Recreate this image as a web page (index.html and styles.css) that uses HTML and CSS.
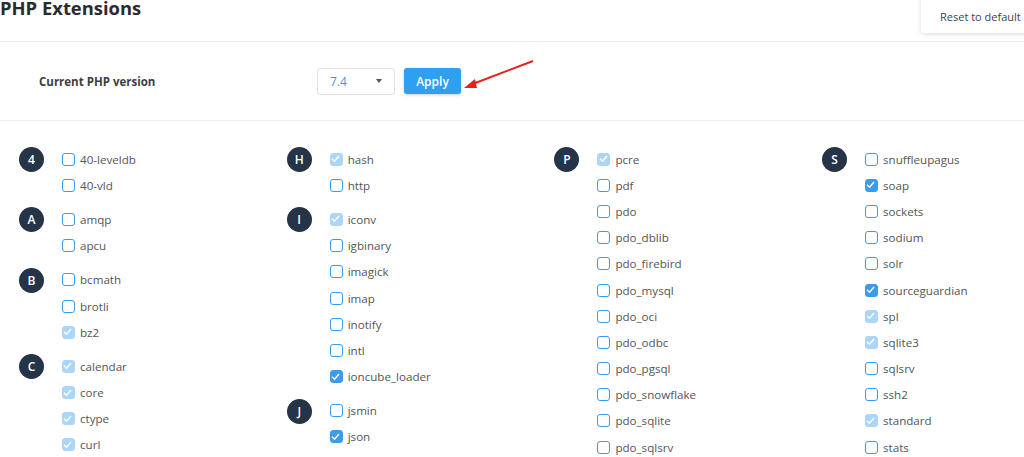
FILE: index.html
```html
<!DOCTYPE html>
<html>
<head>
<meta charset="utf-8">
<link rel="stylesheet" href="styles.css">
</head>
<body>
<div class="page">
  <header class="head">
    <h1 class="title">PHP Extensions</h1>
    <button class="reset">Reset to default</button>
  </header>
  <section class="version">
    <span class="version-label">Current PHP version</span>
    <div class="select"><span class="select-val">7.4</span><span class="caret"></span></div>
    <button class="apply">Apply</button>
    <svg class="arrow" width="80" height="40" viewBox="0 0 80 40">
      <line x1="75" y1="3" x2="12" y2="27" stroke="#e8201c" stroke-width="2"/>
      <polygon points="6,30 17,21 19,30" fill="#e8201c"/>
    </svg>
  </section>
  <section class="grid">
    <div class="col">
      <div class="group"><span class="letter">4</span><ul class="list">
        <li class="item"><span class="cb"></span>40-leveldb</li>
        <li class="item"><span class="cb"></span>40-vld</li></ul></div>
      <div class="group"><span class="letter">A</span><ul class="list">
        <li class="item"><span class="cb"></span>amqp</li>
        <li class="item"><span class="cb"></span>apcu</li></ul></div>
      <div class="group"><span class="letter">B</span><ul class="list">
        <li class="item"><span class="cb"></span>bcmath</li>
        <li class="item"><span class="cb"></span>brotli</li>
        <li class="item"><span class="cb dis"><svg viewBox="0 0 13 13"><polyline points="3,6.8 5.5,9.2 10,4" /></svg></span>bz2</li></ul></div>
      <div class="group"><span class="letter">C</span><ul class="list">
        <li class="item"><span class="cb dis"><svg viewBox="0 0 13 13"><polyline points="3,6.8 5.5,9.2 10,4" /></svg></span>calendar</li>
        <li class="item"><span class="cb dis"><svg viewBox="0 0 13 13"><polyline points="3,6.8 5.5,9.2 10,4" /></svg></span>core</li>
        <li class="item"><span class="cb dis"><svg viewBox="0 0 13 13"><polyline points="3,6.8 5.5,9.2 10,4" /></svg></span>ctype</li>
        <li class="item"><span class="cb dis"><svg viewBox="0 0 13 13"><polyline points="3,6.8 5.5,9.2 10,4" /></svg></span>curl</li></ul></div>
    </div>
    <div class="col">
      <div class="group"><span class="letter">H</span><ul class="list">
        <li class="item"><span class="cb dis"><svg viewBox="0 0 13 13"><polyline points="3,6.8 5.5,9.2 10,4" /></svg></span>hash</li>
        <li class="item"><span class="cb"></span>http</li></ul></div>
      <div class="group"><span class="letter">I</span><ul class="list">
        <li class="item"><span class="cb dis"><svg viewBox="0 0 13 13"><polyline points="3,6.8 5.5,9.2 10,4" /></svg></span>iconv</li>
        <li class="item"><span class="cb"></span>igbinary</li>
        <li class="item"><span class="cb"></span>imagick</li>
        <li class="item"><span class="cb"></span>imap</li>
        <li class="item"><span class="cb"></span>inotify</li>
        <li class="item"><span class="cb"></span>intl</li>
        <li class="item"><span class="cb on"><svg viewBox="0 0 13 13"><polyline points="3,6.8 5.5,9.2 10,4" /></svg></span>ioncube_loader</li></ul></div>
      <div class="group"><span class="letter">J</span><ul class="list">
        <li class="item"><span class="cb"></span>jsmin</li>
        <li class="item"><span class="cb on"><svg viewBox="0 0 13 13"><polyline points="3,6.8 5.5,9.2 10,4" /></svg></span>json</li></ul></div>
    </div>
    <div class="col">
      <div class="group"><span class="letter">P</span><ul class="list">
        <li class="item"><span class="cb dis"><svg viewBox="0 0 13 13"><polyline points="3,6.8 5.5,9.2 10,4" /></svg></span>pcre</li>
        <li class="item"><span class="cb"></span>pdf</li>
        <li class="item"><span class="cb"></span>pdo</li>
        <li class="item"><span class="cb"></span>pdo_dblib</li>
        <li class="item"><span class="cb"></span>pdo_firebird</li>
        <li class="item"><span class="cb"></span>pdo_mysql</li>
        <li class="item"><span class="cb"></span>pdo_oci</li>
        <li class="item"><span class="cb"></span>pdo_odbc</li>
        <li class="item"><span class="cb"></span>pdo_pgsql</li>
        <li class="item"><span class="cb"></span>pdo_snowflake</li>
        <li class="item"><span class="cb"></span>pdo_sqlite</li>
        <li class="item"><span class="cb"></span>pdo_sqlsrv</li></ul></div>
    </div>
    <div class="col">
      <div class="group"><span class="letter">S</span><ul class="list">
        <li class="item"><span class="cb"></span>snuffleupagus</li>
        <li class="item"><span class="cb on"><svg viewBox="0 0 13 13"><polyline points="3,6.8 5.5,9.2 10,4" /></svg></span>soap</li>
        <li class="item"><span class="cb"></span>sockets</li>
        <li class="item"><span class="cb"></span>sodium</li>
        <li class="item"><span class="cb"></span>solr</li>
        <li class="item"><span class="cb on"><svg viewBox="0 0 13 13"><polyline points="3,6.8 5.5,9.2 10,4" /></svg></span>sourceguardian</li>
        <li class="item"><span class="cb dis"><svg viewBox="0 0 13 13"><polyline points="3,6.8 5.5,9.2 10,4" /></svg></span>spl</li>
        <li class="item"><span class="cb dis"><svg viewBox="0 0 13 13"><polyline points="3,6.8 5.5,9.2 10,4" /></svg></span>sqlite3</li>
        <li class="item"><span class="cb"></span>sqlsrv</li>
        <li class="item"><span class="cb"></span>ssh2</li>
        <li class="item"><span class="cb dis"><svg viewBox="0 0 13 13"><polyline points="3,6.8 5.5,9.2 10,4" /></svg></span>standard</li>
        <li class="item"><span class="cb"></span>stats</li></ul></div>
    </div>
  </section>
</div>
</body>
</html>
```
FILE: styles.css
```css
html, body {
  margin: 0;
  padding: 0;
  background: #fff;
  overflow: hidden;
}
body {
  font-family: "Open Sans", "Liberation Sans", sans-serif;
  color: #555;
}
.page {
  position: relative;
  width: 1024px;
  display: flow-root;
}
.head {
  display: flex;
  align-items: flex-start;
  height: 42px;
  border-bottom: 1px solid #ececec;
  box-sizing: border-box;
}
.title {
  margin: -1.5px 0 0 0;
  font-size: 18.4px;
  line-height: 18.4px;
  font-weight: 700;
  color: #2b2b2b;
}
.reset {
  position: absolute;
  top: -4px;
  left: 921px;
  width: 112px;
  height: 37px;
  padding: 4px 0 0 19px;
  text-align: left;
  border: none;
  border-radius: 3px;
  background: #fff;
  box-shadow: 0 1px 5px rgba(0,0,0,0.14);
  font-family: "Open Sans", "Liberation Sans", sans-serif;
  font-size: 11px;
  color: #444;
}
.version {
  position: relative;
  height: 79px;
  border-bottom: 1px solid #ececec;
  box-sizing: border-box;
  display: flex;
  align-items: center;
  padding-left: 39px;
}
.version-label {
  width: 278px;
  font-size: 11.5px;
  font-weight: 700;
  color: #3e3e3e;
}
.select {
  width: 78px;
  height: 27px;
  box-sizing: border-box;
  border: 1px solid #dfe3e8;
  border-radius: 3px;
  display: flex;
  align-items: center;
  padding-left: 12px;
  padding-right: 12px;
  justify-content: space-between;
}
.select-val {
  font-size: 12px;
  color: #3d97e6;
}
.caret {
  width: 0;
  height: 0;
  border-left: 3.5px solid transparent;
  border-right: 3.5px solid transparent;
  border-top: 4px solid #555;
}
.apply {
  margin-left: 9px;
  width: 57px;
  height: 26px;
  border: none;
  border-radius: 3px;
  background: #2f9ff2;
  color: #fff;
  font-family: "Open Sans", "Liberation Sans", sans-serif;
  font-size: 12px;
  font-weight: 600;
  box-shadow: 0 1px 3px rgba(0,0,0,0.2);
  padding: 0;
}
.arrow {
  position: absolute;
  left: 458px;
  top: 16px;
}
.grid {
  display: grid;
  grid-template-columns: repeat(4, 267.7px);
  padding: 25px 0 0 19px;
}
.col {
  display: flex;
  flex-direction: column;
  gap: 8px;
}
.group {
  display: flex;
  align-items: flex-start;
}
.letter {
  width: 25px;
  height: 25px;
  border-radius: 50%;
  background: #253446;
  color: #fff;
  font-size: 12px;
  font-weight: 600;
  display: flex;
  align-items: center;
  justify-content: center;
  margin-top: 1px;
  flex: none;
}
.list {
  list-style: none;
  margin: 0 0 0 18px;
  padding: 0;
}
.item {
  height: 26.2px;
  display: flex;
  align-items: center;
  font-size: 11.6px;
  color: #555;
}
.cb {
  width: 13px;
  height: 13px;
  box-sizing: border-box;
  border: 1.6px solid #3b9bec;
  border-radius: 3px;
  margin-right: 5px;
  flex: none;
  display: flex;
}
.cb svg {
  width: 13px;
  height: 13px;
  margin: -1.6px;
  flex: none;
}
.cb polyline {
  fill: none;
  stroke: #fff;
  stroke-width: 1.4;
}
.cb.on {
  background: #3b9bec;
}
.cb.dis {
  background: #acd6f8;
  border-color: #acd6f8;
}
```
